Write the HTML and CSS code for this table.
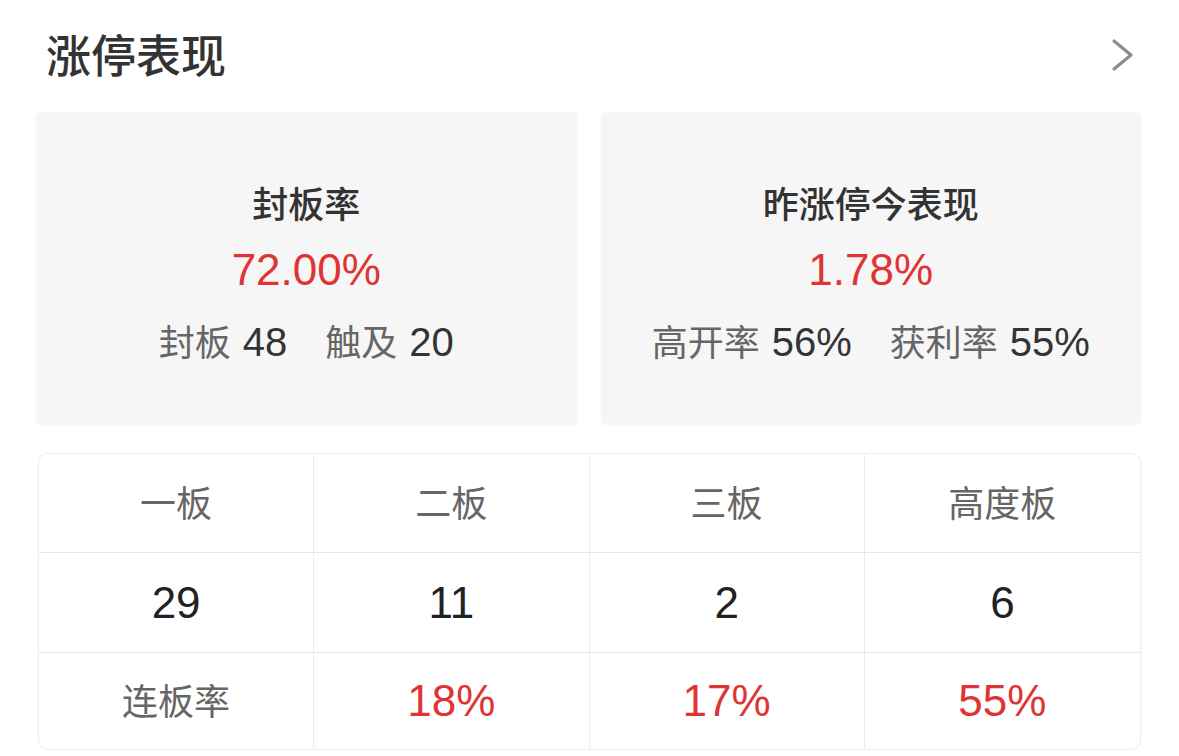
FILE: index.html
```html
<!DOCTYPE html>
<html lang="zh-CN">
<head>
<meta charset="utf-8">
<title>涨停表现</title>
<link rel="stylesheet" href="styles.css">
</head>
<body>
<div class="page">
  <div class="header">
    <h1 class="title">涨停表现</h1>
    <svg class="chevron" width="24" height="34" viewBox="0 0 24 34" aria-hidden="true">
      <polyline points="3,3 20,17 3,31" fill="none" stroke="#8c8c8c" stroke-width="3.2" stroke-linecap="round" stroke-linejoin="round"/>
    </svg>
  </div>

  <div class="cards">
    <div class="card">
      <div class="card-title">封板率</div>
      <div class="card-value">72.00%</div>
      <div class="card-sub">
        <span class="pair"><span class="lbl">封板</span><span class="val">48</span></span>
        <span class="pair"><span class="lbl">触及</span><span class="val">20</span></span>
      </div>
    </div>
    <div class="card">
      <div class="card-title">昨涨停今表现</div>
      <div class="card-value">1.78%</div>
      <div class="card-sub">
        <span class="pair"><span class="lbl">高开率</span><span class="val">56%</span></span>
        <span class="pair"><span class="lbl">获利率</span><span class="val">55%</span></span>
      </div>
    </div>
  </div>

  <div class="table">
    <div class="cell head">一板</div>
    <div class="cell head">二板</div>
    <div class="cell head">三板</div>
    <div class="cell head last">高度板</div>

    <div class="cell num">29</div>
    <div class="cell num">11</div>
    <div class="cell num">2</div>
    <div class="cell num last">6</div>

    <div class="cell head bottom">连板率</div>
    <div class="cell num red bottom">18%</div>
    <div class="cell num red bottom">17%</div>
    <div class="cell num red bottom last">55%</div>
  </div>
</div>
</body>
</html>
```

FILE: styles.css
```css
* {
  box-sizing: border-box;
}

html, body {
  margin: 0;
  padding: 0;
  background: #ffffff;
}

body {
  font-family: "Liberation Sans", "Noto Sans CJK SC", sans-serif;
  color: #333333;
}

.page {
  width: 1179px;
  padding: 32px 38px 0 36px;
}

.header {
  display: flex;
  align-items: center;
  justify-content: space-between;
  height: 44px;
  padding-left: 10px;
  padding-right: 6px;
}

.title {
  margin: 0;
  font-family: "Noto Sans CJK SC", sans-serif;
  font-size: 45px;
  line-height: 44px;
  font-weight: 500;
  color: #333333;
  letter-spacing: 0;
}

.chevron {
  display: block;
  margin-top: 2px;
}

.cards {
  display: grid;
  grid-template-columns: 1fr 1fr;
  gap: 24px;
  margin-top: 36px;
}

.card {
  height: 313px;
  background: #f6f6f6;
  border-radius: 6px;
  box-shadow: 0 0 3px rgba(0, 0, 0, 0.05);
  display: flex;
  flex-direction: column;
  align-items: center;
  padding-top: 72px;
}

.card-title {
  font-family: "Noto Sans CJK SC", sans-serif;
  font-size: 36px;
  line-height: 36px;
  font-weight: 500;
  color: #333333;
}

.card-value {
  margin-top: 25px;
  font-size: 44px;
  line-height: 50px;
  color: #e03434;
}

.card-sub {
  margin-top: 23px;
  display: flex;
  align-items: baseline;
  gap: 38px;
  font-size: 36px;
  line-height: 44px;
}

.pair {
  display: flex;
  align-items: baseline;
}

.lbl {
  font-family: "Noto Sans CJK SC", sans-serif;
  font-size: 36px;
  color: #666666;
}

.val {
  margin-left: 12px;
  font-size: 40px;
  color: #333333;
}

.table {
  margin-top: 28px;
  margin-left: 2px;
  display: grid;
  grid-template-columns: repeat(4, 1fr);
  grid-template-rows: 99px 100px 96px;
  border: 1px solid #ededed;
  border-radius: 10px;
  box-shadow: 0 0 3px rgba(0, 0, 0, 0.04);
  overflow: hidden;
}

.cell {
  display: flex;
  align-items: center;
  justify-content: center;
  border-right: 1px solid #ececec;
  border-bottom: 1px solid #e6e6e6;
}

.cell.last {
  border-right: none;
}

.cell.bottom {
  border-bottom: none;
}

.head {
  font-family: "Noto Sans CJK SC", sans-serif;
  font-size: 36px;
  color: #666666;
  padding-bottom: 5px;
}

.num {
  font-size: 44px;
  color: #222222;
}

.num.red {
  color: #e03434;
}
```
